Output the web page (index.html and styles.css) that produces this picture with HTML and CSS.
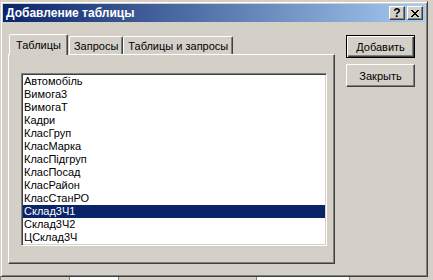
FILE: index.html
```html
<!DOCTYPE html>
<html lang="ru">
<head>
    <meta charset="UTF-8">
    <title>Добавление таблицы</title>
    <link rel="stylesheet" href="styles.css">
</head>
<body>

    <div class="window">
        <div class="titlebar">
            <span class="title">Добавление таблицы</span>
            <div class="caption-buttons">
                <button class="cap help">?</button>
                <button class="cap close">
                    <svg width="8" height="7" viewBox="0 0 8 7">
                        <path d="M0 0h2v1h1v1h2V1h1V0h2v1H7v1H6v1H5v1h1v1h1v1h1v1H6V6H5V5H3v1H2v1H0V6h1V5h1V4h1V3H2V2H1V1H0z" fill="#000"/>
                    </svg>
                </button>
            </div>
        </div>

        <div class="content">
            <div class="tabs">
                <div class="tab-strip">
                    <div class="tab active">Таблицы</div>
                    <div class="tab">Запросы</div>
                    <div class="tab">Таблицы и запросы</div>
                </div>
                <div class="panel">
                    <ul class="list">
                        <li>Автомобіль</li>
                        <li>Вимога3</li>
                        <li>ВимогаТ</li>
                        <li>Кадри</li>
                        <li>КласГруп</li>
                        <li>КласМарка</li>
                        <li>КласПідгруп</li>
                        <li>КласПосад</li>
                        <li>КласРайон</li>
                        <li>КласСтанРО</li>
                        <li class="selected">Склад3Ч1</li>
                        <li>Склад3Ч2</li>
                        <li>ЦСклад3Ч</li>
                    </ul>
                </div>
            </div>

            <div class="actions">
                <button class="btn default">Добавить</button>
                <button class="btn">Закрыть</button>
            </div>
        </div>
    </div>

    <!-- edge of the grid window behind the dialog -->
    <div class="behind">
        <div class="cell gray"></div>
        <div class="cell white w1"></div>
        <div class="cell gray w2"></div>
        <div class="cell white w3"></div>
    </div>

</body>
</html>
```

FILE: styles.css
```css
body {
    margin: 0;
    background-color: #d4d0c8;
    font-family: "Liberation Sans", Arial, sans-serif;
    font-size: 11px;
    color: #000;
    overflow: hidden;
}
.window {
    box-sizing: border-box;
    width: 428px;
    height: 276px;
    margin-top: 1px;
    padding: 2px;
    background-color: #d4d0c8;
    border: 1px solid;
    border-color: #d4d0c8 #404040 #404040 #d4d0c8;
    box-shadow: inset 1px 1px #fff, inset -1px -1px #808080;
}
.titlebar {
    display: flex;
    align-items: center;
    justify-content: space-between;
    height: 18px;
    padding: 0 2px 0 3px;
    background: linear-gradient(to right, #0a246a, #a6caf0);
}
.title {
    color: #fff;
    font-weight: bold;
    font-size: 12px;
}
.caption-buttons {
    display: flex;
    gap: 2px;
}
.cap {
    display: flex;
    align-items: center;
    justify-content: center;
    box-sizing: border-box;
    width: 16px;
    height: 14px;
    padding: 0;
    background-color: #d4d0c8;
    border: 1px solid;
    border-color: #fff #404040 #404040 #fff;
    box-shadow: inset -1px -1px #808080;
    font-family: "Liberation Sans", Arial, sans-serif;
    font-weight: bold;
    font-size: 12px;
    line-height: 12px;
}
.content {
    display: flex;
    align-items: flex-start;
    padding: 12px 0 0 5px;
}
.tabs {
    width: 327px;
}
.tab-strip {
    display: flex;
    align-items: flex-end;
    height: 20px;
    padding-left: 1px;
    position: relative;
    z-index: 1;
}
.tab {
    box-sizing: border-box;
    height: 18px;
    padding: 2px 4px 0 4px;
    border: 1px solid;
    border-bottom: none;
    border-color: #fff #404040 transparent #fff;
    border-radius: 2px 2px 0 0;
    box-shadow: inset -1px 0 #808080;
    line-height: 14px;
    background-color: #d4d0c8;
}
.tab.active {
    height: 21px;
    margin-bottom: -1px;
    padding: 3px 6px 0 6px;
}
.tab.active + .tab {
    margin-left: 1px;
}
.panel {
    box-sizing: border-box;
    height: 210px;
    padding: 18px 7px 0 12px;
    border: 1px solid;
    border-color: #fff #404040 #404040 #fff;
    box-shadow: inset -1px -1px #808080;
}
.list {
    box-sizing: border-box;
    height: 173px;
    margin: 0;
    padding: 1px 0 0 0;
    list-style: none;
    background-color: #fff;
    border: 1px solid;
    border-color: #808080 #fff #fff #808080;
    box-shadow: inset 1px 1px #404040, inset -1px -1px #d4d0c8;
}
.list li {
    height: 13px;
    margin: 0 1px;
    padding-left: 1px;
    line-height: 13px;
}
.list li.selected {
    background-color: #0a246a;
    color: #fff;
}
.actions {
    display: flex;
    flex-direction: column;
    gap: 6px;
    margin: 1px 0 0 11px;
}
.btn {
    box-sizing: border-box;
    width: 69px;
    height: 23px;
    padding: 0;
    background-color: #d4d0c8;
    border: 1px solid;
    border-color: #fff #404040 #404040 #fff;
    box-shadow: inset -1px -1px #808080;
    font-family: "Liberation Sans", Arial, sans-serif;
    font-size: 11px;
    color: #000;
}
.btn.default {
    border: 1px solid #000;
    box-shadow: inset 1px 1px #fff, inset -1px -1px #404040, inset -2px -2px #808080;
}
.behind {
    display: flex;
    height: 4px;
}
.cell {
    width: 68px;
    border-left: 1px solid #808080;
}
.cell.white {
    background-color: #fff;
}
.cell.w1 {
    width: 48px;
}
.cell.w2 {
    width: 137px;
}
.cell.w3 {
    width: 92px;
    border-right: 1px solid #808080;
}
```
